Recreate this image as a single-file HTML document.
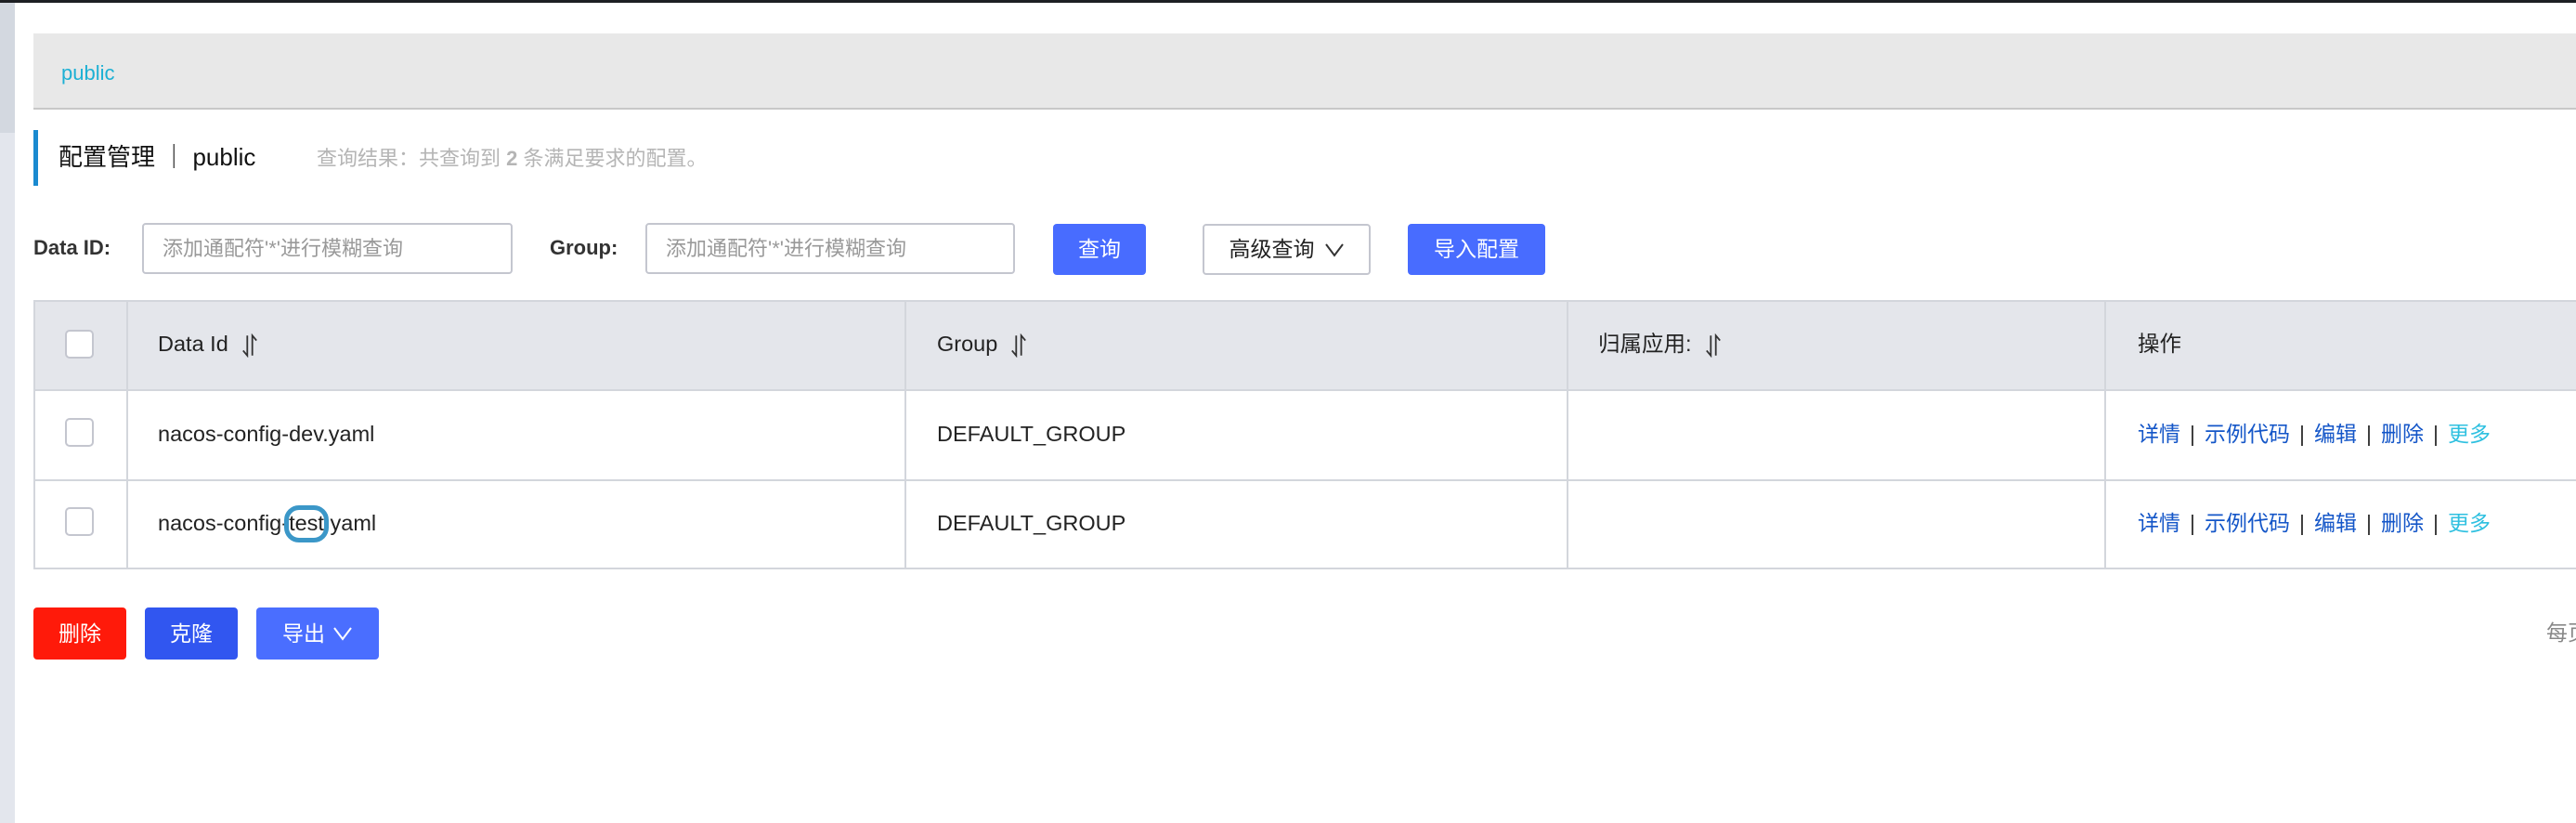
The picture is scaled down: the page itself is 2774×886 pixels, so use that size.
<!DOCTYPE html>
<html><head><meta charset="utf-8"><style>
*{margin:0;padding:0;box-sizing:border-box}
body{width:2774px;height:886px;overflow:hidden;background:#fff;position:relative;font-family:"Liberation Sans","Noto Sans CJK SC",sans-serif;color:#333}
.a{position:absolute}
.sort{display:inline-block;vertical-align:middle;margin-left:14px}
.btn{position:absolute;border-radius:4px;color:#fff;font-size:23px;display:flex;align-items:center;justify-content:center;line-height:1}
.inp{position:absolute;border:2px solid #c4c6cf;border-radius:4px;font-size:22px;color:#999;padding-left:20px;display:flex;align-items:center;line-height:1}
.vl{position:absolute;width:2px;background:#d3d6dc}
.hl{position:absolute;height:2px;background:#d3d6dc}
.ops{position:absolute;left:2302px;font-size:23px;color:#1456c8;line-height:1}
.ops span.s{color:#333;margin:0 10px}
.ops span.m{color:#2fc0e0}
.ct{position:absolute;font-size:23.5px;color:#222;line-height:1}
.cb{position:absolute;left:70px;width:31px;height:31px;border:2px solid #c4c6cf;border-radius:5px;background:#fff}
.hi{position:relative}
.hi:after{content:"";position:absolute;left:-5px;right:-5px;top:-6px;bottom:-8px;border:5px solid #3b97c8;border-radius:16px}
</style></head><body>
<div class="a" style="left:0;top:0;width:2774px;height:3px;background:#1d1f23"></div>
<div class="a" style="left:0;top:3px;width:16px;height:883px;background:#e3e6ed"></div>
<div class="a" style="left:0;top:3px;width:16px;height:140px;background:#d3d8e0"></div>
<div class="a" style="left:36px;top:36px;width:2738px;height:82px;background:#e8e8e8;border-bottom:2px solid #c8c8c8"></div>
<div class="a" style="left:66px;top:68px;font-size:22px;color:#1cb0d4;line-height:1">public</div>
<div class="a" style="left:36px;top:140px;width:5px;height:60px;background:#1a8ad0"></div>
<div class="a" style="left:63px;top:156px;font-size:26px;color:#111;line-height:1">配置管理 ｜ public</div>
<div class="a" style="left:341px;top:160px;font-size:22px;color:#b5b5b5;line-height:1">查询结果：共查询到 <b>2</b> 条满足要求的配置。</div>

<div class="a" style="left:36px;top:256px;font-size:22px;font-weight:bold;color:#333;line-height:1">Data ID:</div>
<div class="inp" style="left:153px;top:240px;width:399px;height:55px">添加通配符'*'进行模糊查询</div>
<div class="a" style="left:592px;top:256px;font-size:22px;font-weight:bold;color:#333;line-height:1">Group:</div>
<div class="inp" style="left:695px;top:240px;width:398px;height:55px">添加通配符'*'进行模糊查询</div>
<div class="btn" style="left:1134px;top:241px;width:100px;height:55px;background:#486cff">查询</div>
<div class="btn" style="left:1295px;top:241px;width:181px;height:55px;background:#fff;border:2px solid #c4c6cf;color:#222">高级查询 <svg width="22" height="16" style="margin-left:10px"><path d="M2 2 L11 14 L20 2" fill="none" stroke="#333" stroke-width="2"/></svg></div>
<div class="btn" style="left:1516px;top:241px;width:148px;height:55px;background:#486cff">导入配置</div>

<div class="a" style="left:36px;top:324px;width:2738px;height:96px;background:#e4e6eb"></div>
<div class="hl" style="left:36px;top:323px;width:2738px"></div>
<div class="hl" style="left:36px;top:419px;width:2738px"></div>
<div class="hl" style="left:36px;top:516px;width:2738px"></div>
<div class="hl" style="left:36px;top:611px;width:2738px"></div>
<div class="vl" style="left:36px;top:323px;height:290px"></div>
<div class="vl" style="left:136px;top:323px;height:290px"></div>
<div class="vl" style="left:974px;top:323px;height:290px"></div>
<div class="vl" style="left:1687px;top:323px;height:290px"></div>
<div class="vl" style="left:2266px;top:323px;height:290px"></div>

<div class="cb" style="top:355px"></div>
<div class="cb" style="top:450px"></div>
<div class="cb" style="top:546px"></div>
<svg width="0" height="0" style="position:absolute"><defs><symbol id="so" viewBox="0 0 20 28"><path d="M7 2 V26 L2 20 M13 26 V2 L18 8" fill="none" stroke="#333" stroke-width="2"/></symbol></defs></svg>
<div class="ct" style="left:170px;top:359px">Data Id<svg class="sort" width="18" height="26"><use href="#so"/></svg></div>
<div class="ct" style="left:1009px;top:359px">Group<svg class="sort" width="18" height="26"><use href="#so"/></svg></div>
<div class="ct" style="left:1721px;top:359px">归属应用:<svg class="sort" width="18" height="26"><use href="#so"/></svg></div>
<div class="ct" style="left:2302px;top:359px">操作</div>

<div class="ct" style="left:170px;top:456px">nacos-config-dev.yaml</div>
<div class="ct" style="left:170px;top:552px">nacos-config-<span class="hi">test</span>.yaml</div>
<div class="ct" style="left:1009px;top:456px">DEFAULT_GROUP</div>
<div class="ct" style="left:1009px;top:552px">DEFAULT_GROUP</div>
<div class="ops" style="top:456px">详情<span class="s">|</span>示例代码<span class="s">|</span>编辑<span class="s">|</span>删除<span class="s">|</span><span class="m">更多</span></div>
<div class="ops" style="top:552px">详情<span class="s">|</span>示例代码<span class="s">|</span>编辑<span class="s">|</span>删除<span class="s">|</span><span class="m">更多</span></div>

<div class="btn" style="left:36px;top:654px;width:100px;height:56px;background:#ff1a0a">删除</div>
<div class="btn" style="left:156px;top:654px;width:100px;height:56px;background:#3156f0">克隆</div>
<div class="btn" style="left:276px;top:654px;width:132px;height:56px;background:#4a6eff">导出 <svg width="22" height="16" style="margin-left:8px"><path d="M2 2 L11 14 L20 2" fill="none" stroke="#fff" stroke-width="2"/></svg></div>
<div class="a" style="left:2742px;top:670px;font-size:23px;color:#888;white-space:nowrap;line-height:1">每页</div>
</body></html>
